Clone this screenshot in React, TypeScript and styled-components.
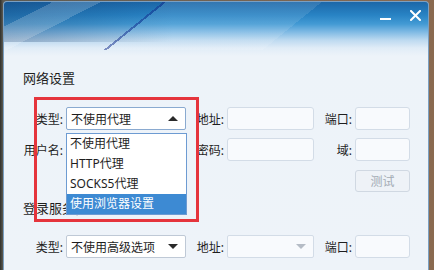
import React from 'react';
import styled, { createGlobalStyle } from 'styled-components';

const GlobalStyle = createGlobalStyle`
  html, body {
    margin: 0;
    padding: 0;
  }
  body {
    width: 434px;
    height: 270px;
    overflow: hidden;
    background: linear-gradient(to right, #2f302c 0, #5c5a52 3px, #8a6a50 100%);
    font-family: "Noto Sans", "Noto Sans CJK SC", sans-serif;
    color: #1e1e1e;
  }
`;

const Desktop = styled.div`
  display: flex;
  height: 270px;
  padding: 1px 5px 0 3px;
  box-sizing: border-box;
`;

const Window = styled.div`
  position: relative;
  flex: 1;
  overflow: hidden;
  border: 1px solid #7a9fc2;
  border-bottom: none;
  border-radius: 4px 4px 0 0;
  background-color: #eef3f9;
  background-image:
    linear-gradient(153deg, transparent 0, transparent 22px, rgba(255, 255, 255, 0.18) 22px, rgba(255, 255, 255, 0.18) 44px, transparent 44px),
    linear-gradient(141deg, transparent 0, transparent 100px, rgba(20, 45, 140, 0.5) 100px, rgba(20, 45, 140, 0.5) 102px, rgba(255, 255, 255, 0.1) 102px, rgba(255, 255, 255, 0.1) 200px, transparent 200px),
    linear-gradient(to right, rgba(10, 45, 95, 0.3) 0, rgba(10, 45, 95, 0) 40%),
    linear-gradient(to bottom, #1c67a8 0, #2883c4 13px, #439ad4 22px, #80bae4 30px, #bcd9f0 38px, #e0ecf7 46px, #edf3f9 54px, #eef3f9 100%);
  background-size: 100% 48px, 100% 48px, 100% 40px, 100% 100%;
  background-repeat: no-repeat;
  padding-left: 19px;
  box-sizing: border-box;
`;

const TitleBar = styled.div`
  height: 28px;
  display: flex;
  justify-content: flex-end;
  align-items: flex-start;
  gap: 19px;
  padding-right: 7px;
`;

const MinButton = styled.span`
  width: 11px;
  height: 2px;
  margin-top: 16px;
  background: #ffffff;
`;

const CloseButton = styled.svg`
  width: 11px;
  height: 11px;
  margin-top: 8px;
`;

const SectionTitle = styled.div<{ $top: number }>`
  margin-top: ${({ $top }) => $top}px;
  height: 20px;
  line-height: 20px;
  font-size: 13px;
  white-space: nowrap;
`;

const FormGrid = styled.div<{ $top: number }>`
  display: grid;
  grid-template-columns: 43px 120px 41px 87px 41px 55px;
  grid-auto-rows: 23px;
  row-gap: 8px;
  align-items: center;
  margin-top: ${({ $top }) => $top}px;
`;

const Label = styled.span`
  text-align: right;
  padding-right: 3px;
  font-size: 12px;
  white-space: nowrap;
`;

const Input = styled.div`
  height: 23px;
  box-sizing: border-box;
  border: 1px solid #d3dce7;
  border-radius: 3px;
  background: #f8fafd;
`;

const SelectCell = styled.div`
  position: relative;
  height: 23px;
`;

const Select = styled.div<{ $focused?: boolean; $disabled?: boolean }>`
  height: 23px;
  box-sizing: border-box;
  display: flex;
  align-items: center;
  justify-content: space-between;
  padding: 0 5px 0 4px;
  border: 1px solid ${({ $focused, $disabled }) => ($focused ? '#8aaad0' : $disabled ? '#d3dce7' : '#bfc9d6')};
  border-radius: 2px;
  background: ${({ $disabled }) => ($disabled ? '#f8fafd' : '#ffffff')};
  font-size: 12px;
  white-space: nowrap;
`;

const Arrow = styled.span<{ $up?: boolean; $muted?: boolean }>`
  width: 0;
  height: 0;
  border-left: 5px solid transparent;
  border-right: 5px solid transparent;
  ${({ $up, $muted }) =>
    $up
      ? `border-bottom: 5px solid ${$muted ? '#b5bcc6' : '#2a2a2a'};`
      : `border-top: 5px solid ${$muted ? '#b5bcc6' : '#2a2a2a'};`}
  margin-right: 2px;
`;

const DropList = styled.ul`
  position: absolute;
  top: 26px;
  left: 0;
  width: 121px;
  margin: 0;
  padding: 0;
  list-style: none;
  box-sizing: border-box;
  border: 1px solid #6d9bd2;
  background: #ffffff;
  z-index: 2;
`;

const DropItem = styled.li<{ $active?: boolean }>`
  height: 20px;
  line-height: 20px;
  padding-left: 3px;
  font-size: 12px;
  white-space: nowrap;
  background: ${({ $active }) => ($active ? '#3d8ad3' : 'transparent')};
  color: ${({ $active }) => ($active ? '#ffffff' : '#1e1e1e')};
`;

const TestButton = styled.div`
  grid-column: 6;
  height: 22px;
  box-sizing: border-box;
  display: flex;
  align-items: center;
  justify-content: center;
  border: 1px solid #d0d8e2;
  border-radius: 3px;
  background: #eef2f7;
  color: #a3abb4;
  font-size: 12px;
`;

const Annotation = styled.div`
  position: absolute;
  left: 30px;
  top: 95px;
  width: 165px;
  height: 125px;
  box-sizing: border-box;
  border: 3px solid #e5343c;
  z-index: 3;
  pointer-events: none;
`;

const proxyOptions = ['不使用代理', 'HTTP代理', 'SOCKS5代理', '使用浏览器设置'];

export default function App() {
  return (
    <>
      <GlobalStyle />
      <Desktop>
        <Window>
          <TitleBar>
            <MinButton />
            <CloseButton viewBox="0 0 11 11">
              <path d="M1 1 L10 10 M10 1 L1 10" stroke="#ffffff" strokeWidth="2" strokeLinecap="square" />
            </CloseButton>
          </TitleBar>

          <SectionTitle $top={38}>网络设置</SectionTitle>
          <FormGrid $top={19}>
            <Label>类型:</Label>
            <SelectCell>
              <Select $focused>
                不使用代理
                <Arrow $up />
              </Select>
              <DropList>
                {proxyOptions.map((opt, i) => (
                  <DropItem key={opt} $active={i === proxyOptions.length - 1}>
                    {opt}
                  </DropItem>
                ))}
              </DropList>
            </SelectCell>
            <Label>地址:</Label>
            <Input />
            <Label>端口:</Label>
            <Input />

            <Label>用户名:</Label>
            <Input />
            <Label>密码:</Label>
            <Input />
            <Label>域:</Label>
            <Input />

            <TestButton>测试</TestButton>
          </FormGrid>

          <SectionTitle $top={6}>登录服务器</SectionTitle>
          <FormGrid $top={17}>
            <Label>类型:</Label>
            <Select>
              不使用高级选项
              <Arrow />
            </Select>
            <Label>地址:</Label>
            <Select $disabled>
              <span />
              <Arrow $muted />
            </Select>
            <Label>端口:</Label>
            <Input />
          </FormGrid>

          <Annotation />
        </Window>
      </Desktop>
    </>
  );
}
